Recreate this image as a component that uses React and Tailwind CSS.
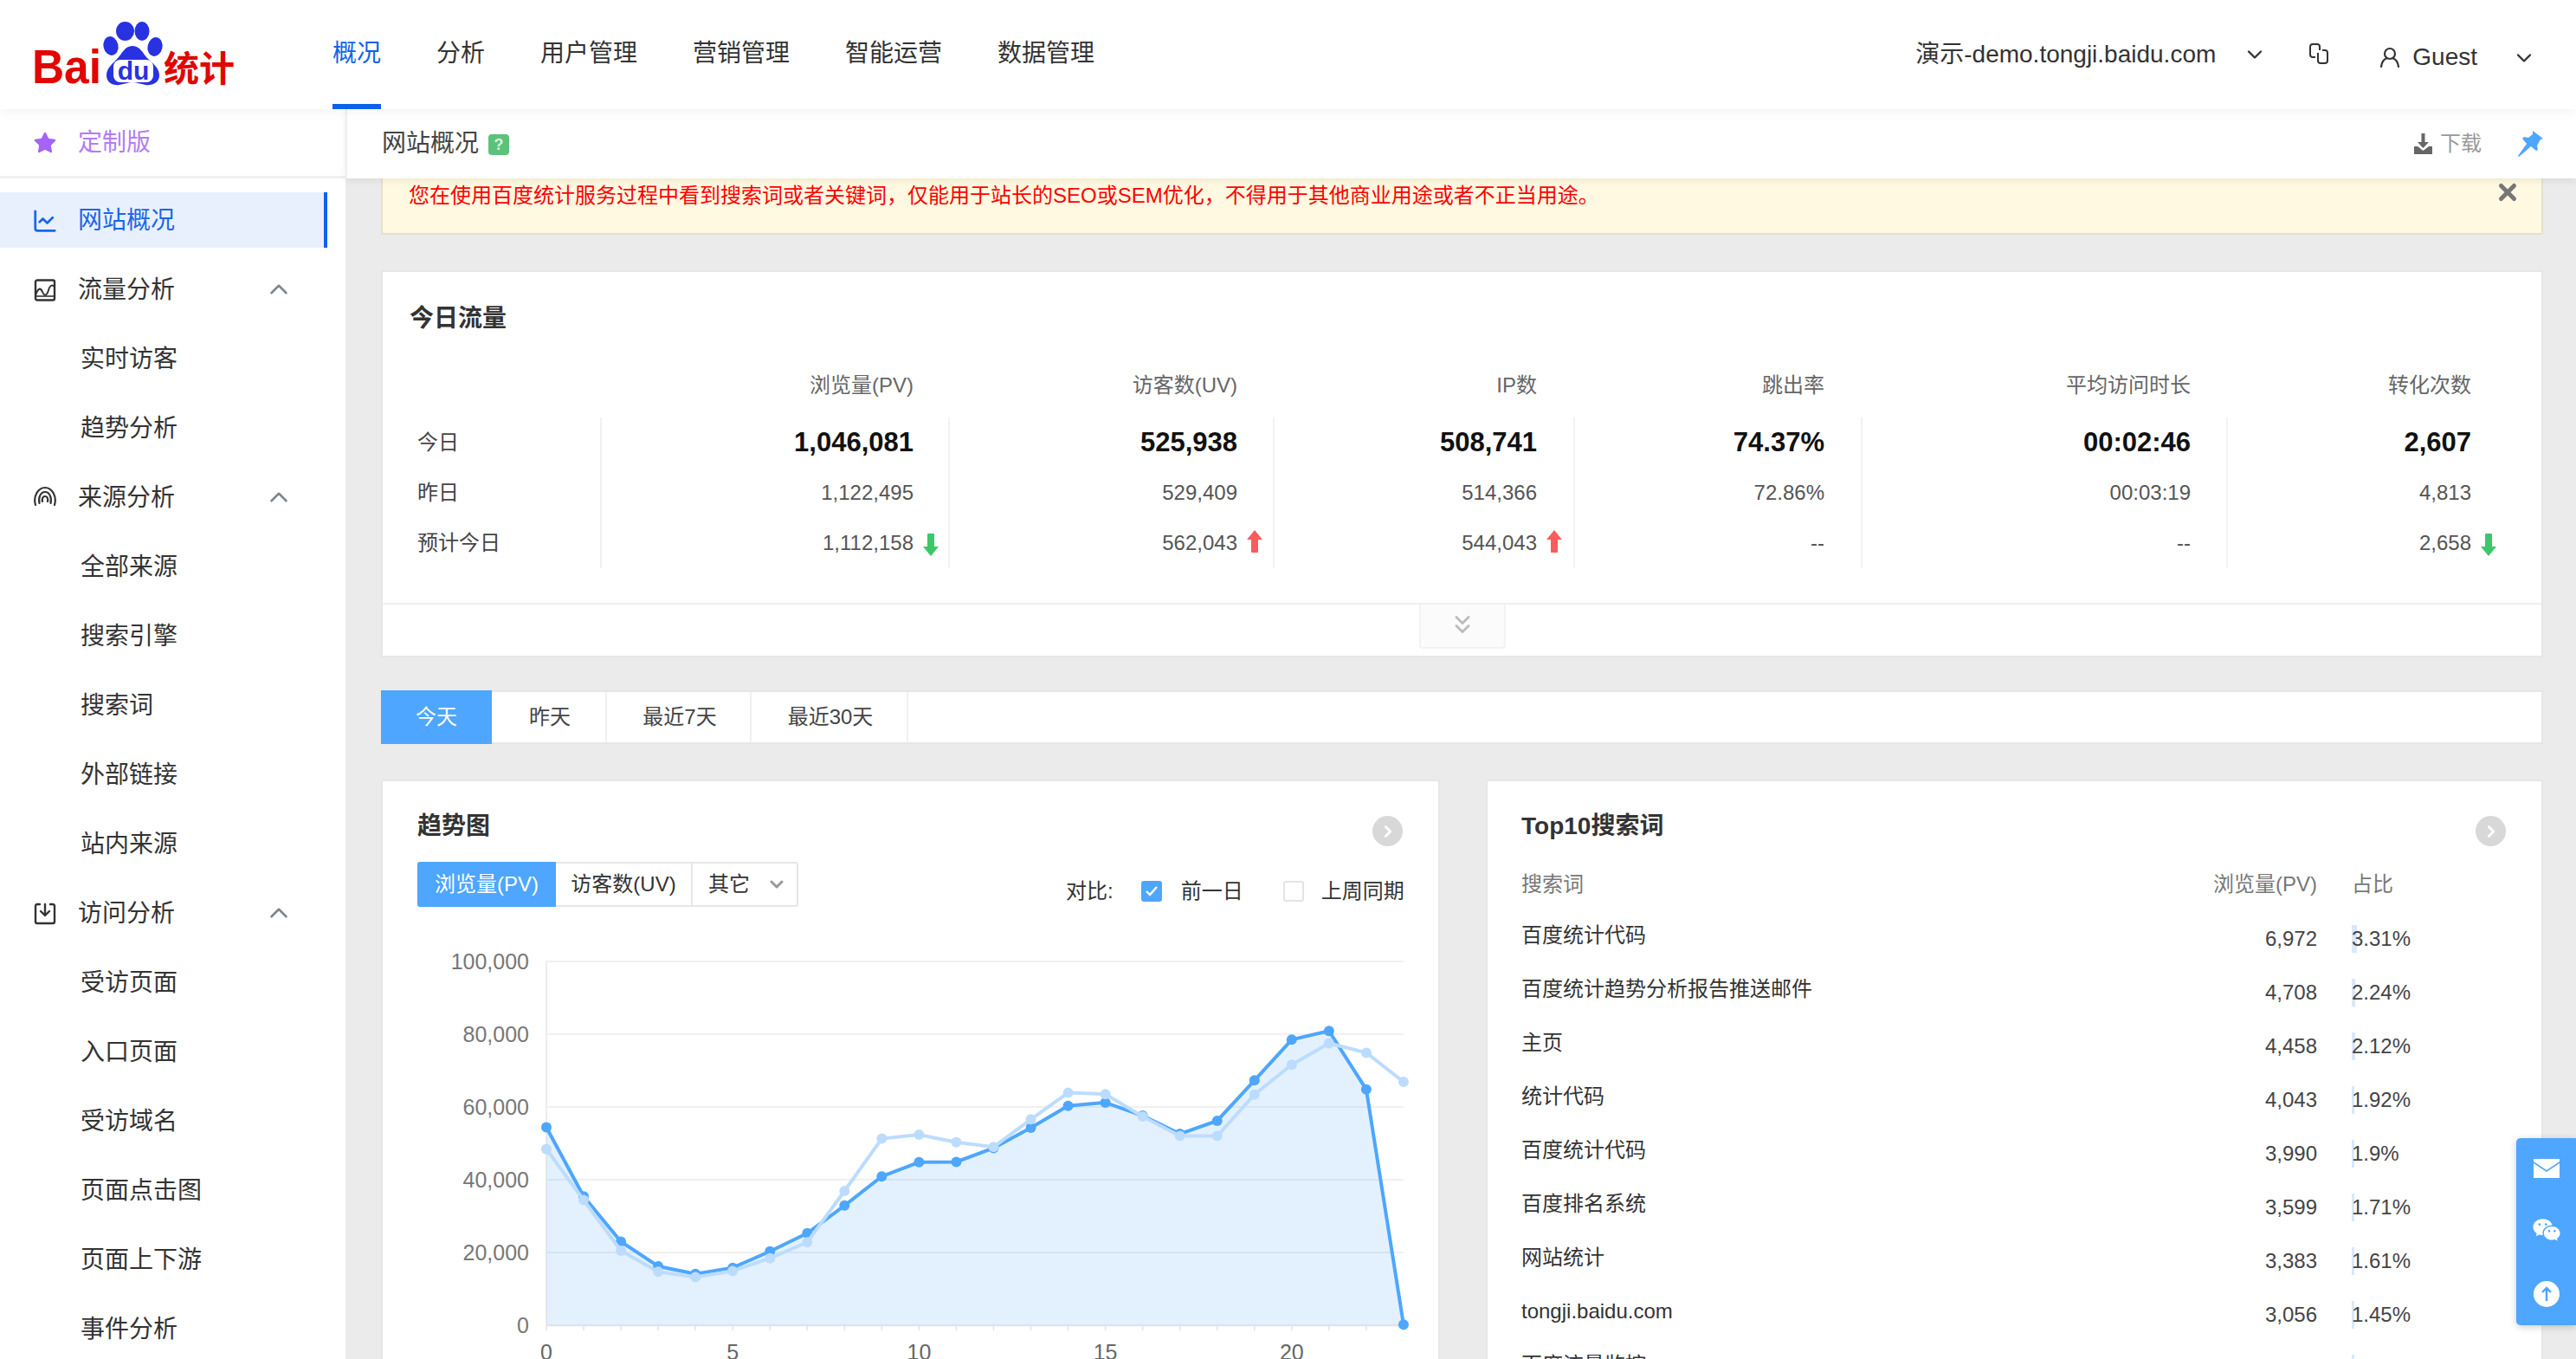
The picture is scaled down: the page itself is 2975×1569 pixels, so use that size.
import { ChartLine, ChevronDown, ChevronRight, ChevronUp, ChevronsDown, Star, X } from "lucide-react"
import { RiWechatFill } from "react-icons/ri"

const navItems = ["概况", "分析", "用户管理", "营销管理", "智能运营", "数据管理"]

const statCols = [
  { title: "", today: "今日", yesterday: "昨日", predict: "预计今日", pad: "pr-0 pl-[40px]", left: true },
  { title: "浏览量(PV)", today: "1,046,081", yesterday: "1,122,495", predict: "1,112,158", arrow: "down", pad: "pr-[40px]" },
  { title: "访客数(UV)", today: "525,938", yesterday: "529,409", predict: "562,043", arrow: "up", pad: "pr-[41px]" },
  { title: "IP数", today: "508,741", yesterday: "514,366", predict: "544,043", arrow: "up", pad: "pr-[42px]" },
  { title: "跳出率", today: "74.37%", yesterday: "72.86%", predict: "--", pad: "pr-[42px]" },
  { title: "平均访问时长", today: "00:02:46", yesterday: "00:03:19", predict: "--", pad: "pr-[41px]" },
  { title: "转化次数", today: "2,607", yesterday: "4,813", predict: "2,658", arrow: "down", pad: "pr-[81px]" },
]

const searchRows = [
  ["百度统计代码", "6,972", 3.31],
  ["百度统计趋势分析报告推送邮件", "4,708", 2.24],
  ["主页", "4,458", 2.12],
  ["统计代码", "4,043", 1.92],
  ["百度统计代码", "3,990", 1.9],
  ["百度排名系统", "3,599", 1.71],
  ["网站统计", "3,383", 1.61],
  ["tongji.baidu.com", "3,056", 1.45],
  ["百度流量监控", "", 1.4],
]

const todayData = [54.4, 35.4, 23, 16.2, 14.1, 15.8, 20.3, 25.3, 32.9, 40.9, 44.8, 44.9, 48.7, 54.3, 60.3, 61.2, 57.6, 52.6, 56.2, 67.3, 78.5, 80.9, 64.8, 0.2]
const prevData = [48.4, 34.4, 20.5, 14.7, 13.2, 14.9, 18.4, 22.8, 36.9, 51.3, 52.4, 50.3, 49, 56.6, 63.9, 63.5, 57.4, 52, 52, 63.4, 71.6, 77.5, 74.9, 66.9]

const px = (i) => 631 + i * 43.04
const py = (v) => 1529 - v * 4.2
const toPoints = (data) => data.map((v, i) => `${px(i)},${py(v)}`).join(" ")

const Logo = () => (
  <svg width="300" height="126" viewBox="0 0 300 126" className="shrink-0">
    <text x="37" y="96" fontSize="56" fontWeight="700" fill="#e10601" textLength="80" lengthAdjust="spacingAndGlyphs" fontFamily="Liberation Sans">Bai</text>
    <g fill="#2932e1">
      <ellipse cx="144.5" cy="36" rx="10.5" ry="11" />
      <ellipse cx="164" cy="36" rx="8.5" ry="11" />
      <ellipse cx="128" cy="53" rx="8.5" ry="11" transform="rotate(-12 128 53)" />
      <ellipse cx="179" cy="54" rx="8.5" ry="11" transform="rotate(12 179 54)" />
      <path d="M153 53C162 53 165 62 170 67C176 73 184 78 184 87C184 96 175 99 168 98C162 97 158 95 153 95C148 95 144 97 138 98C131 99 123 96 123 87C123 78 131 73 136 67C141 62 144 53 153 53Z" />
    </g>
    <rect x="131" y="69" width="46" height="26" rx="8" fill="#fff" />
    <text x="154" y="92" textAnchor="middle" fontSize="30" fontWeight="700" fill="#2932e1" fontFamily="Liberation Sans">du</text>
    <text x="189" y="94" fontSize="41" fontWeight="700" fill="#e10601" fontFamily="Noto Sans CJK SC">统计</text>
  </svg>
)

const TrafficIcon = () => (
  <svg width="28" height="28" viewBox="0 0 28 28" fill="none" stroke="#333" strokeWidth="2.4">
    <rect x="3" y="2.5" width="22" height="23" rx="2" />
    <path d="M3 20c3-9 6-9 8-4s5 5 7-2 5-6 7-4" strokeWidth="2" />
    <path d="M3 21h22" strokeWidth="1.6" />
  </svg>
)

const SourceIcon = () => (
  <svg width="28" height="28" viewBox="0 0 28 28" fill="none" stroke="#333" strokeWidth="2.2" strokeLinecap="round">
    <path d="M3 22C0 12 6 2 14 2s14 10 11 20" />
    <path d="M7.5 20C6 13 9 7 14 7s8 6 6.5 13" />
    <path d="M11 18c-.8-3.5.5-6 3-6s3.800 2.500 3 6" />
  </svg>
)

const VisitIcon = () => (
  <svg width="28" height="28" viewBox="0 0 28 28" fill="none" stroke="#333" strokeWidth="2.4" strokeLinecap="round" strokeLinejoin="round">
    <path d="M8 3H5a2 2 0 0 0-2 2v18a2 2 0 0 0 2 2h18a2 2 0 0 0 2-2V5a2 2 0 0 0-2-2h-3" />
    <path d="M14 3v12M9 11l5 5 5-5" />
  </svg>
)

const ChainIcon = () => (
  <svg width="24" height="26" viewBox="0 0 24 26" fill="none" stroke="#333" strokeWidth="2">
    <path d="M8 17H5a3 3 0 0 1-3-3V5a3 3 0 0 1 3-3h5a3 3 0 0 1 3 3v4" />
    <path d="M16 9h3a3 3 0 0 1 3 3v9a3 3 0 0 1-3 3h-5a3 3 0 0 1-3-3v-9" />
  </svg>
)

const UserIcon = () => (
  <svg width="24" height="24" viewBox="0 0 24 24" fill="none" stroke="#333" strokeWidth="2.2" strokeLinecap="round">
    <circle cx="12" cy="8" r="6" />
    <path d="M2 23c1-6 4-9 6-9.500M22 23c-1-6-4-9-6-9.500" />
  </svg>
)

const DownloadIcon = () => (
  <svg width="21" height="24" viewBox="0 0 21 24" fill="#666">
    <path d="M8.500 0h4v10h4.500l-6.500 7-6.500-7h4.500z" />
    <path d="M0 15h4l6.500 5 6.500-5h4v9H0z" />
  </svg>
)

const PinIcon = () => (
  <svg width="29" height="30" viewBox="0 0 29 30" fill="#4ea6ff">
    <path d="M17 0l12 9-3 1-4 7 1 5-2 1-6-5L1 30 0 29 10 15 5 9l2-2 5 1 5-4z" />
  </svg>
)

const Arrow = ({ dir }) =>
  dir === "up" ? (
    <svg width="18" height="26" viewBox="0 0 18 26" fill="#f85c5c" className="absolute left-full top-1/2 ml-[11px] -translate-y-[15px]">
      <path d="M9 0l9 11h-5v13a2 2 0 0 1-8 0V11H0z" />
    </svg>
  ) : (
    <svg width="18" height="26" viewBox="0 0 18 26" fill="#3cc76a" className="absolute left-full top-1/2 ml-[11px] -translate-y-[11px]">
      <path d="M9 26L0 15h5V2a2 2 0 0 1 8 0v13h5z" />
    </svg>
  )

const MoreButton = () => (
  <div className="flex h-[35px] w-[35px] items-center justify-center rounded-full bg-[#d8d8d8] mt-[8px]">
    <ChevronRight size={22} strokeWidth={3} className="text-white" />
  </div>
)

const SideGroup = ({ icon, title, items }) => (
  <div>
    <div className="flex h-[80px] items-center pl-[38px] text-[#333]">
      <span className="w-[28px]">{icon}</span>
      <span className="ml-[24px]">{title}</span>
      <ChevronUp size={34} strokeWidth={1.8} className="ml-auto mr-[60px] -mt-[2px] text-[#7d8590]" />
    </div>
    {items.map((item) => (
      <div key={item} className="flex h-[80px] items-center pl-[93px] text-[#333]">{item}</div>
    ))}
  </div>
)

const TrendChart = () => (
  <svg viewBox="442 1060 1219 520" className="block h-[520px] w-[1219px]">
    {[0, 20, 40, 60, 80, 100].map((v) => (
      <g key={v}>
        {v > 0 && <line x1="631" x2="1621" y1={py(v)} y2={py(v)} stroke="#f0f0f0" strokeWidth="2" />}
        <text x="611" y={py(v) + 9} textAnchor="end" fontSize="25" fill="#777">{v === 0 ? "0" : `${v},000`}</text>
      </g>
    ))}
    <line x1="631" x2="631" y1="1109" y2="1529" stroke="#eeeeee" strokeWidth="2" />
    <polygon points={`${px(0)},1529 ${toPoints(todayData)} ${px(23)},1529`} fill="#4ea6ff" fillOpacity="0.16" />
    <line x1="631" x2="1621" y1="1529" y2="1529" stroke="#dde3ee" strokeWidth="2.500" />
    {todayData.map((_, i) => (
      <line key={i} x1={px(i)} x2={px(i)} y1="1529" y2="1535" stroke="#dde3ee" strokeWidth="1.500" />
    ))}
    {[0, 5, 10, 15, 20].map((v) => (
      <text key={v} x={px(v)} y="1569" textAnchor="middle" fontSize="25" fill="#666">{v}</text>
    ))}
    <polyline points={toPoints(todayData)} fill="none" stroke="#4ea6ff" strokeWidth="4" />
    {todayData.map((v, i) => (
      <circle key={i} cx={px(i)} cy={py(v)} r="6" fill="#4ea6ff" />
    ))}
    <polyline points={toPoints(prevData)} fill="none" stroke="#bcdcff" strokeWidth="4" />
    {prevData.map((v, i) => (
      <circle key={i} cx={px(i)} cy={py(v)} r="6" fill="#bcdcff" />
    ))}
  </svg>
)

export default function App() {
  return (
    <div className="relative flex h-[1569px] w-full flex-col overflow-hidden bg-[#ebebeb] font-['Liberation_Sans','Noto_Sans_CJK_SC',sans-serif] text-[28px] text-[#333]">

      {/* top bar */}
      <header className="relative z-20 flex h-[126px] shrink-0 items-center bg-white shadow-[0_3px_12px_rgba(0,0,0,0.05)]">
        <Logo />
        <nav className="ml-[84px] flex h-full gap-[64px]">
          {navItems.map((item, i) => (
            <div key={item} className={i === 0 ? "flex h-full items-center border-b-[6px] border-[#0c62ea] pt-[4px] text-[#0c62ea]" : "flex h-full items-center pb-[2px]"}>
              {item}
            </div>
          ))}
        </nav>
        <div className="ml-auto flex items-center pb-[1px]">
          <span>演示-demo.tongji.baidu.com</span>
          <ChevronDown size={28} strokeWidth={2} className="ml-[31px]" />
          <span className="ml-[48px] -mt-[2px]"><ChainIcon /></span>
          <span className="ml-[58px] mt-[6px]"><UserIcon /></span>
          <span className="ml-[14px] mt-[6px]">Guest</span>
          <ChevronDown size={28} strokeWidth={2} className="ml-[40px] mr-[46px] mt-[8px]" />
        </div>
      </header>

      <div className="flex min-h-0 flex-1">

        {/* sidebar */}
        <aside className="w-[399px] shrink-0 bg-white">
          <div className="flex h-[80px] items-center border-b-[3px] border-[#f0f0f0] pl-[38px] pt-[1px] text-[#b27cf5]">
            <Star size={28} fill="#a663f5" strokeWidth={1} className="text-[#a663f5]" />
            <span className="ml-[24px]">定制版</span>
          </div>
          <div className="mr-[21px] mt-[16px] flex h-[64px] items-center border-r-[4px] border-[#0c62ea] bg-[#e8f0fe] pl-[38px] pt-[2px] text-[#1a66e8]">
            <ChartLine size={30} strokeWidth={2.2} className="-ml-[1px] -mr-[1px]" />
            <span className="ml-[24px]">网站概况</span>
          </div>
          <div className="mt-[9px]">
            <SideGroup icon={<TrafficIcon />} title="流量分析" items={["实时访客", "趋势分析"]} />
            <SideGroup icon={<SourceIcon />} title="来源分析" items={["全部来源", "搜索引擎", "搜索词", "外部链接", "站内来源"]} />
            <SideGroup icon={<VisitIcon />} title="访问分析" items={["受访页面", "入口页面", "受访域名", "页面点击图", "页面上下游", "事件分析"]} />
          </div>
        </aside>

        <main className="min-w-0 flex-1">

          {/* sub header */}
          <div className="relative z-10 flex h-[80px] items-center border-l-2 border-[#eeeeee] bg-white pl-[40px] pr-[38px] shadow-[0_3px_8px_rgba(0,0,0,0.07)]">
            <span className="text-[#444]">网站概况</span>
            <span className="ml-[11px] mt-[2px] flex h-[24px] w-[24px] items-center justify-center rounded-[4px] bg-[#5cc27a] text-[18px] font-bold text-[#d6f2de]">?</span>
            <span className="ml-auto flex items-center text-[24px] text-[#999]">
              <DownloadIcon />
              <span className="ml-[9px]">下载</span>
            </span>
            <span className="ml-[42px]"><PinIcon /></span>
          </div>

          <div className="pl-[41px] pr-[38px]">

            {/* alert */}
            <div className="flex h-[65px] items-start justify-between rounded-b-[3px] border-2 border-t-0 border-[#e4e1cb] bg-[#fef9e0] pl-[30px] pr-[24px] text-[24px] leading-[40px] text-[#ff0000]">
              <span>您在使用百度统计服务过程中看到搜索词或者关键词，仅能用于站长的SEO或SEM优化，不得用于其他商业用途或者不正当用途。</span>
              <X size={30} strokeWidth={4} className="mt-[1px] text-[#777]" />
            </div>

            {/* today traffic */}
            <section className="mt-[41px] h-[447px] border-2 border-[#e6e6e6] bg-white">
              <h2 className="ml-[31px] mt-[34px] text-[28px] font-bold leading-[40px]">今日流量</h2>
              <div className="mt-[32px] grid grid-cols-[251px_402px_375px_347px_332px_422px_364px] text-[24px]">
                {statCols.map((col) => (
                  <div key={col.title} className={col.left ? "flex h-[50px] items-center pl-[40px]" : `flex h-[50px] items-center justify-end text-[#666] ${col.pad}`}>
                    {col.title}
                  </div>
                ))}
              </div>
              <div className="mt-[12px] grid grid-cols-[251px_402px_375px_347px_332px_422px_364px] text-[24px] text-[#555]">
                {statCols.map((col, i) => (
                  <div key={col.title} className={i === 0 ? "pl-[40px] text-[#444]" : `border-l-2 border-[#f2f2f2] text-right ${col.pad}`}>
                    <div className={i === 0 ? "flex h-[58px] items-center" : "flex h-[58px] items-center justify-end text-[31px] font-bold text-[#111]"}>{col.today}</div>
                    <div className={i === 0 ? "flex h-[58px] items-center" : "flex h-[58px] items-center justify-end"}>{col.yesterday}</div>
                    <div className={i === 0 ? "flex h-[58px] items-center" : "flex h-[58px] items-center justify-end"}>
                      <span className="relative">
                        {col.predict}
                        {col.arrow && <Arrow dir={col.arrow} />}
                      </span>
                    </div>
                  </div>
                ))}
              </div>
              <div className="mt-[40px] flex h-[61px] justify-center border-t-2 border-[#f0f0f0]">
                <div className="flex h-[51px] w-[100px] items-center justify-center rounded-b-[4px] border-2 border-t-0 border-[#f2f2f2] bg-[#fbfbfc] pb-[3px]">
                  <ChevronsDown size={34} strokeWidth={2} className="text-[#bbbbbb]" />
                </div>
              </div>
            </section>

            {/* date tabs */}
            <div className="mt-[38px] flex h-[62px] border-2 border-l-0 border-[#e6e6e6] bg-white text-[24px] text-[#444]">
              <div className="-my-[2px] flex w-[128px] items-center justify-center bg-[#4ea6ff] text-white">今天</div>
              <div className="flex w-[133px] items-center justify-center border-r-2 border-[#f0f0f0] pl-[3px]">昨天</div>
              <div className="flex w-[167px] items-center justify-center border-r-2 border-[#f0f0f0] pl-[3px]">最近7天</div>
              <div className="flex w-[181px] items-center justify-center border-r-2 border-[#f0f0f0] pl-[3px]">最近30天</div>
            </div>

            <div className="mt-[41px] flex justify-between">

              {/* trend chart */}
              <section className="h-[800px] w-[1223px] rounded-t-[3px] border-2 border-[#e6e6e6] bg-white">
                <div className="flex items-start justify-between pl-[40px] pr-[41px] pt-[32px]">
                  <h2 className="font-bold leading-[40px]">趋势图</h2>
                  <MoreButton />
                </div>
                <div className="mt-[18px] flex items-start pl-[40px] text-[24px]">
                  <div className="flex h-[52px] rounded-[3px] border-2 border-l-0 border-[#e6e6e6]">
                    <div className="-my-[2px] flex w-[160px] items-center justify-center rounded-l-[3px] bg-[#4ea6ff] text-white">浏览量(PV)</div>
                    <div className="flex w-[158px] items-center justify-center border-r-2 border-[#e6e6e6]">访客数(UV)</div>
                    <div className="flex w-[120px] items-center pl-[18px]">
                      其它
                      <ChevronDown size={24} strokeWidth={3} className="ml-[19px] text-[#999]" />
                    </div>
                  </div>
                  <div className="ml-[309px] mt-[20px] flex h-[28px] items-center">
                    <span>对比:</span>
                    <span className="ml-[32px] flex h-[24px] w-[24px] items-center justify-center rounded-[3px] bg-[#4ea6ff]">
                      <svg width="16" height="14" viewBox="0 0 16 14" fill="none" stroke="#fff" strokeWidth="2.4"><path d="M2 7l4 4 8-9" /></svg>
                    </span>
                    <span className="ml-[22px]">前一日</span>
                    <span className="ml-[46px] h-[24px] w-[24px] rounded-[3px] border-2 border-[#e4e4e4] bg-white" />
                    <span className="ml-[20px]">上周同期</span>
                  </div>
                </div>
                <div className="mt-[14px]">
                  <TrendChart />
                </div>
              </section>

              {/* top 10 search words */}
              <section className="h-[800px] w-[1221px] rounded-t-[3px] border-2 border-[#e6e6e6] bg-white">
                <div className="flex items-start justify-between pl-[39px] pr-[41px] pt-[32px]">
                  <h2 className="font-bold leading-[40px]">Top10搜索词</h2>
                  <MoreButton />
                </div>
                <div className="mt-[18px] flex h-[52px] items-center pl-[39px] pr-[39px] text-[24px] text-[#777]">
                  <span className="flex-1">搜索词</span>
                  <span className="w-[180px] text-right">浏览量(PV)</span>
                  <span className="ml-[40px] w-[180px]">占比</span>
                </div>
                <div className="mt-[6px] pl-[39px] pr-[39px] text-[24px]">
                  {searchRows.map(([word, pv, pct], i) => (
                    <div key={i} className="flex h-[62px] items-center">
                      <span className="flex-1 pb-[8px]">{word}</span>
                      <span className="w-[180px] text-right text-[#444]">{pv}</span>
                      <span className="relative ml-[40px] flex h-[32px] w-[180px] items-center text-[#444]">
                        <span className="absolute left-0 top-0 h-full bg-[#d9e8fb]" style={{ width: pct * 1.8 }} />
                        <span className="relative">{pv ? `${pct}%` : ""}</span>
                      </span>
                    </div>
                  ))}
                </div>
              </section>

            </div>
          </div>
        </main>
      </div>

      {/* floating tools */}
      <div className="absolute right-0 top-[1314px] z-30 flex h-[216px] w-[69px] flex-col items-center justify-between rounded-l-[5px] bg-[#4ea6ff] pb-[21px] pt-[24px] text-white shadow-[0_2px_8px_rgba(0,0,0,0.2)]">
        <svg width="30" height="22" viewBox="0 0 30 22" fill="#fff">
          <path d="M0 0h30v3L15 13 0 3z" />
          <path d="M0 5l15 10L30 5v17H0z" />
        </svg>
        <RiWechatFill size={34} />
        <svg width="30" height="30" viewBox="0 0 30 30">
          <circle cx="15" cy="15" r="15" fill="#fff" />
          <path d="M15 23V8M10 13l5-5 5 5" fill="none" stroke="#4ea6ff" strokeWidth="2.400" />
        </svg>
      </div>
    </div>
  )
}
